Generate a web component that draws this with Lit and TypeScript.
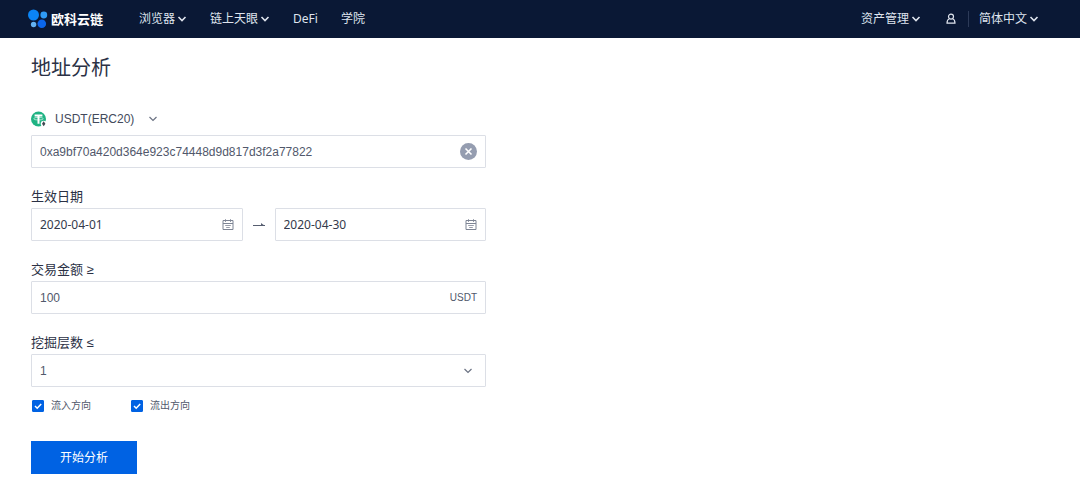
import { LitElement, html, css } from "lit";
import { customElement, state } from "lit/decorators.js";

const chevron = html`<svg class="chevron" viewBox="0 0 10 10" aria-hidden="true">
  <path d="M1.5 3 L5 6.5 L8.5 3" />
</svg>`;

const calendar = html`<svg class="calendar" viewBox="0 0 12 12" aria-hidden="true">
  <path d="M1 1.5 H11 V10.5 H1 Z M1 4.5 H11 M3.5 0.3 V2.8 M8.5 0.3 V2.8" />
  <path d="M3.2 6.5 H8.8 M4.2 8.5 H7.8" stroke-width="0.8" />
</svg>`;

@customElement("app-root")
export class AppRoot extends LitElement {
  @state() private address = "0xa9bf70a420d364e923c74448d9d817d3f2a77822";

  static styles = css`
    :host {
      display: block;
      min-height: 100vh;
      background: #fff;
      color: #2b3145;
      font: 12px/16px "Liberation Sans", "Noto Sans CJK SC", sans-serif;
    }
    * {
      box-sizing: border-box;
    }
    input,
    select,
    button {
      font: inherit;
      color: inherit;
      margin: 0;
      padding: 0;
      border: 0;
      background: none;
      outline: none;
      appearance: none;
      border-radius: 0;
    }
    button,
    select {
      cursor: pointer;
    }
    svg {
      display: block;
      flex: none;
      fill: none;
      stroke: currentColor;
    }
    header {
      display: flex;
      align-items: center;
      height: 38px;
      padding: 0 41px 0 28px;
      background: #0a1835;
      color: #dfe4ee;
      font-family: "Noto Sans", "Noto Sans CJK SC", sans-serif;
    }
    a {
      color: inherit;
      text-decoration: none;
    }
    .brand {
      display: flex;
      align-items: center;
      gap: 3px;
      margin-right: 36px;
      color: #fff;
      font-size: 13px;
      font-weight: 700;
      line-height: 18px;
    }
    .logo {
      width: 20px;
      height: 20px;
      stroke: none;
    }
    .menu {
      display: flex;
      align-items: center;
      gap: 23px;
    }
    .item {
      display: flex;
      align-items: center;
      gap: 2px;
      white-space: nowrap;
    }
    .chevron {
      width: 10px;
      height: 10px;
      stroke-width: 1.2;
    }
    .item .chevron {
      stroke-width: 1.6;
    }
    .account {
      display: flex;
      align-items: center;
      margin-left: auto;
    }
    .user {
      margin-left: 24px;
      padding-right: 11px;
      border-right: 1px solid #2c3a58;
      height: 16px;
      display: flex;
      align-items: center;
    }
    .user svg {
      width: 12px;
      height: 12px;
      stroke-width: 1.2;
    }
    .user + .item {
      margin-left: 10px;
    }
    main {
      padding: 15px 31px;
    }
    h1 {
      margin: 0 0 28px;
      font-size: 20px;
      line-height: 30px;
      font-weight: 400;
    }
    form {
      max-width: 455px;
    }
    .coin {
      display: flex;
      align-items: center;
      gap: 8px;
      width: max-content;
      margin-bottom: 8px;
      color: #434a5c;
    }
    .coin > svg {
      width: 16px;
      height: 16px;
      stroke: none;
    }
    .pick {
      display: grid;
      align-items: center;
    }
    .pick > * {
      grid-area: 1 / 1;
    }
    .pick select {
      width: 100%;
      padding-right: 23px;
    }
    .pick .chevron {
      justify-self: end;
      color: #6b7283;
      pointer-events: none;
    }
    .label {
      display: block;
      font-size: 13px;
      line-height: 18px;
      margin: 20px 0 2px;
    }
    .box {
      display: flex;
      align-items: center;
      height: 33px;
      padding: 0 8px;
      border: 1px solid #dcdfe6;
      border-radius: 1px;
      color: #51586b;
    }
    .box input,
    .box .pick {
      flex: 1;
      min-width: 0;
      width: 100%;
    }
    .box .pick .chevron {
      margin-right: 4px;
    }
    .clear svg {
      width: 17px;
      height: 17px;
      stroke: none;
    }
    .dates {
      display: flex;
      align-items: center;
      gap: 10px;
    }
    .dates .box {
      flex: 1;
      min-width: 0;
      color: #343a4c;
      font-family: "Noto Sans", sans-serif;
    }
    .arrow {
      width: 12px;
      height: 6px;
      color: #565e70;
    }
    .calendar {
      width: 12px;
      height: 12px;
      color: #7d8494;
    }
    .unit {
      font-size: 10px;
    }
    .checks {
      display: flex;
      gap: 40px;
      margin-top: 11px;
      padding-left: 1px;
      color: #51586b;
      font-size: 10px;
    }
    .checks label {
      display: flex;
      align-items: center;
      gap: 7px;
    }
    .tick {
      display: grid;
      width: 12px;
    }
    .tick > * {
      grid-area: 1 / 1;
      width: 12px;
      height: 12px;
    }
    .tick input {
      border: 1px solid #c4c9d4;
      border-radius: 1px;
      cursor: pointer;
    }
    .tick input:checked {
      background: #0062e3;
      border-color: #0062e3;
    }
    .tick svg {
      visibility: hidden;
      color: #fff;
      pointer-events: none;
      stroke-width: 1.5;
    }
    .tick input:checked + svg {
      visibility: visible;
    }
    .submit {
      display: block;
      margin-top: 27px;
      height: 33px;
      padding: 0 29px;
      background: #0062e3;
      color: #fff;
    }
  `;

  private check(id: string, text: string) {
    return html`<label for=${id}>
      <span class="tick">
        <input id=${id} type="checkbox" checked />
        <svg viewBox="0 0 12 12" aria-hidden="true"><path d="M3 6 L5.2 8.2 L9.2 4" /></svg>
      </span>
      ${text}
    </label>`;
  }

  private date(id: string, label: string, value: string) {
    return html`<div class="box">
      <input id=${id} type="text" aria-label=${label} .value=${value} />${calendar}
    </div>`;
  }

  render() {
    return html`
      <header>
        <a class="brand" href="#">
          <svg class="logo" viewBox="0 0 20 20" aria-hidden="true">
            <circle cx="5.5" cy="6" r="5.5" fill="#0b84f5" />
            <circle cx="15.8" cy="6" r="3.4" fill="#2f9bf5" />
            <circle cx="5.6" cy="15.5" r="2.7" fill="#63b2f2" />
            <circle cx="13.8" cy="14.8" r="4.3" fill="#0b66ec" />
          </svg>
          欧科云链
        </a>
        <nav class="menu">
          <a class="item" href="#">浏览器 ${chevron}</a>
          <a class="item" href="#">链上天眼 ${chevron}</a>
          <a class="item" href="#">DeFi</a>
          <a class="item" href="#">学院</a>
        </nav>
        <div class="account">
          <a class="item" href="#">资产管理 ${chevron}</a>
          <a class="user" href="#" aria-label="账户">
            <svg viewBox="0 0 12 12" aria-hidden="true">
              <circle cx="6" cy="3.6" r="2.5" />
              <path d="M4.4 5.8 C2.6 6.4 2 7.6 2 10.2 H10 C10 7.6 9.4 6.4 7.6 5.8" />
            </svg>
          </a>
          <a class="item" href="#">简体中文 ${chevron}</a>
        </div>
      </header>
      <main>
        <h1>地址分析</h1>
        <form @submit=${(e: Event) => e.preventDefault()}>
          <div class="coin">
            <svg viewBox="0 0 16 16" aria-hidden="true">
              <circle cx="7.5" cy="8" r="7.5" fill="#1fb383" />
              <path d="M3.6 3.6 H11.4 V5.4 H8.5 V12.8 H6.5 V5.4 H3.6 Z" fill="#fff" />
              <ellipse cx="7.5" cy="7.7" rx="4.8" ry="1.3" stroke="#fff" stroke-width="0.6" />
              <circle cx="12.7" cy="12.7" r="3" fill="#fff" />
              <path d="M12.7 10.2 L14.4 12.7 L12.7 15.2 L11 12.7 Z" fill="#3e4a52" />
            </svg>
            <div class="pick">
              <select aria-label="币种"><option>USDT(ERC20)</option></select>
              ${chevron}
            </div>
          </div>
          <div class="box">
            <input
              type="text"
              aria-label="地址"
              .value=${this.address}
              @input=${(e: Event) => (this.address = (e.target as HTMLInputElement).value)}
            />
            <button class="clear" type="button" aria-label="清除" @click=${() => (this.address = "")}>
              <svg viewBox="0 0 17 17" aria-hidden="true">
                <circle cx="8.5" cy="8.5" r="8.5" fill="#959db0" />
                <path d="M5.5 5.5 L11.5 11.5 M11.5 5.5 L5.5 11.5" stroke="#fff" stroke-width="1.6" />
              </svg>
            </button>
          </div>

          <label class="label" for="from">生效日期</label>
          <div class="dates">
            ${this.date("from", "开始日期", "2020-04-01")}
            <svg class="arrow" viewBox="0 0 12 6" aria-hidden="true">
              <path d="M0 3.5 H12" />
              <path d="M8 1 L12 4 H8 Z" fill="currentColor" stroke="none" />
            </svg>
            ${this.date("to", "结束日期", "2020-04-30")}
          </div>

          <label class="label" for="amount">交易金额 ≥</label>
          <div class="box">
            <input id="amount" type="text" value="100" />
            <span class="unit">USDT</span>
          </div>

          <label class="label" for="depth">挖掘层数 ≤</label>
          <div class="box">
            <div class="pick">
              <select id="depth"><option>1</option></select>
              ${chevron}
            </div>
          </div>

          <div class="checks">
            ${this.check("inflow", "流入方向")} ${this.check("outflow", "流出方向")}
          </div>
          <button class="submit" type="submit">开始分析</button>
        </form>
      </main>
    `;
  }
}
